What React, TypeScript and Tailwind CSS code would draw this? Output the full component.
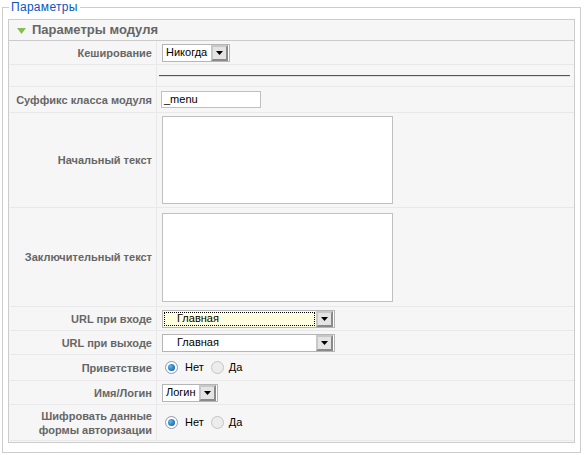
import React from 'react';

const Select: React.FC<{ value: string; width: string; focused?: boolean; indent?: boolean }> = ({ value, width, focused, indent }) => (
    <div
        className={`flex items-center h-[18px] border border-[#b5b5b5] ${width} ${focused ? 'bg-[#ffffe0]' : 'bg-white'}`}
    >
        <div
            className={`flex-1 h-full flex items-center text-[11px] text-black ${indent ? 'pl-[14px]' : 'pl-[3px]'} ${focused ? 'outline-1 outline-dotted outline-black -outline-offset-2' : ''}`}
        >
            {value}
        </div>
        <div className="w-[17px] h-[16px] mr-px border-2 border-[#8a8a8a] border-t-[#c8c8c8] border-l-[#c8c8c8] bg-[#e4e4e4] flex items-center justify-center">
            <svg width="7" height="4" viewBox="0 0 7 4">
                <path d="M0 0h7L3.5 4z" fill="#000" />
            </svg>
        </div>
    </div>
);

const Radio: React.FC<{ checked?: boolean }> = ({ checked }) => (
    <span
        className={`inline-flex items-center justify-center w-[13px] h-[13px] rounded-full border ${checked ? 'border-[#8a9bb0] bg-white' : 'border-[#c4c4c4] bg-[#ececec]'}`}
    >
        {checked && (
            <span className="w-[7px] h-[7px] rounded-full bg-[radial-gradient(circle_at_35%_35%,#5db7f0,#0a4f8f)]" />
        )}
    </span>
);

const RadioPair: React.FC = () => (
    <div className="flex items-center text-[11px] text-black pl-[6px]">
        <Radio checked />
        <span className="ml-[7px] mr-[7px]">Нет</span>
        <Radio />
        <span className="ml-[5px]">Да</span>
    </div>
);

interface Row {
    label: React.ReactNode;
    height: string;
    content: React.ReactNode;
}

const rows: Row[] = [
    { label: 'Кеширование', height: 'h-[24px]', content: <div className="pl-[3px]"><Select value="Никогда" width="w-[68px]" /></div> },
    {
        label: '',
        height: 'h-[22px]',
        content: <div className="mr-[4px] border-t border-t-[#555] border-b border-b-[#e0e0e0]" />,
    },
    {
        label: 'Суффикс класса модуля',
        height: 'h-[26px]',
        content: <div className="ml-[2px] w-[100px] h-[17px] border border-[#c0c0c0] bg-white text-[11px] text-black flex items-center pl-[2px]">_menu</div>,
    },
    {
        label: 'Начальный текст',
        height: 'h-[95px]',
        content: <div className="ml-[3px] w-[231px] h-[88px] border border-[#c0c0c0] bg-white" />,
    },
    {
        label: 'Заключительный текст',
        height: 'h-[99px]',
        content: <div className="ml-[3px] w-[231px] h-[89px] border border-[#c0c0c0] bg-white" />,
    },
    { label: 'URL при входе', height: 'h-[24px]', content: <div className="pl-[3px]"><Select value="Главная" width="w-[173px]" focused indent /></div> },
    { label: 'URL при выходе', height: 'h-[24px]', content: <div className="pl-[3px]"><Select value="Главная" width="w-[173px]" indent /></div> },
    { label: 'Приветствие', height: 'h-[26px]', content: <RadioPair /> },
    { label: 'Имя/Логин', height: 'h-[24px]', content: <div className="pl-[3px]"><Select value="Логин" width="w-[56px]" /></div> },
    {
        label: (
            <>
                Шифровать данные
                <br />
                формы авторизации
            </>
        ),
        height: 'h-[36px]',
        content: <RadioPair />,
    },
];

const App: React.FC = () => {
    return (
        <div className="w-[585px] h-[455px] bg-white font-['Liberation_Sans',Arial,sans-serif] pt-0">
            <fieldset className="ml-[2px] w-[579px] border border-[#cccccc] px-[5px] pb-[9px]">
                <legend className="ml-px px-[2px] text-[12px] leading-[15px] tracking-[0.3px] text-[#0b55c4]">Параметры</legend>
                <div className="mt-[4px] border border-[#cccccc] bg-[#f6f6f6]">
                    {/* Заголовок панели */}
                    <div className="h-[21px] flex items-center border-b border-[#cccccc] pl-[8px]">
                        <svg width="9" height="6" viewBox="0 0 9 6" className="mr-[6px] mt-px">
                            <path d="M0 0h9L4.5 6z" fill="#86bf4f" />
                        </svg>
                        <span className="text-[13px] font-bold text-[#666666]">Параметры модуля</span>
                    </div>

                    <div className="pl-px pb-px">
                        {rows.map((row, i) => (
                            <div key={i} className={`flex ${row.height} border-b border-[#e9e9e9]`}>
                                <div className="w-[147px] shrink-0 border-r border-[#e9e9e9] flex items-center justify-end pr-[4px] text-right text-[11px] leading-[14px] font-bold text-[#666666]">
                                    {row.label}
                                </div>
                                <div className="flex-1 flex flex-col justify-center pl-[2px]">{row.content}</div>
                            </div>
                        ))}
                    </div>
                </div>
            </fieldset>
        </div>
    );
};

export default App;
